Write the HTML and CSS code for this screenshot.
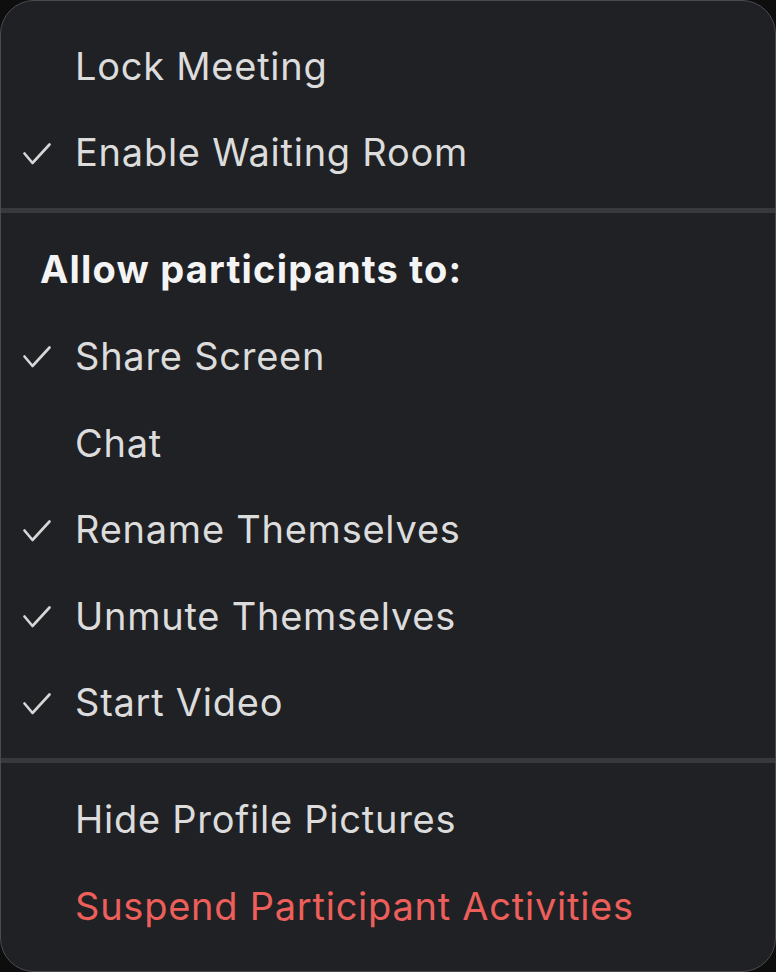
FILE: index.html
```html
<!DOCTYPE html>
<html>
<head>
<meta charset="utf-8">
<link rel="stylesheet" href="styles.css">
</head>
<body>
<div class="menu">
  <div class="group first">
    <div class="item"><span class="check"></span><span class="label">Lock Meeting</span></div>
    <div class="item"><span class="check"><svg viewBox="0 0 28 22" width="28" height="22"><path d="M1.5 10.5 L9.5 20 L26.5 1.5" /></svg></span><span class="label">Enable Waiting Room</span></div>
  </div>
  <div class="divider"></div>
  <div class="group">
    <div class="header">Allow participants to:</div>
    <div class="item"><span class="check"><svg viewBox="0 0 28 22" width="28" height="22"><path d="M1.5 10.5 L9.5 20 L26.5 1.5" /></svg></span><span class="label">Share Screen</span></div>
    <div class="item"><span class="check"></span><span class="label">Chat</span></div>
    <div class="item"><span class="check"><svg viewBox="0 0 28 22" width="28" height="22"><path d="M1.5 10.5 L9.5 20 L26.5 1.5" /></svg></span><span class="label">Rename Themselves</span></div>
    <div class="item"><span class="check"><svg viewBox="0 0 28 22" width="28" height="22"><path d="M1.5 10.5 L9.5 20 L26.5 1.5" /></svg></span><span class="label">Unmute Themselves</span></div>
    <div class="item"><span class="check"><svg viewBox="0 0 28 22" width="28" height="22"><path d="M1.5 10.5 L9.5 20 L26.5 1.5" /></svg></span><span class="label">Start Video</span></div>
  </div>
  <div class="divider second"></div>
  <div class="group last">
    <div class="item"><span class="check"></span><span class="label">Hide Profile Pictures</span></div>
    <div class="item danger"><span class="check"></span><span class="label">Suspend Participant Activities</span></div>
  </div>
</div>
</body>
</html>
```

FILE: styles.css
```css
html, body {
  margin: 0;
  padding: 0;
  background: #0e0e0f;
}
body {
  width: 776px;
  height: 972px;
  overflow: hidden;
  font-family: "Inter", "Noto Sans", sans-serif;
}
.menu {
  box-sizing: border-box;
  width: 776px;
  height: 972px;
  background: #202124;
  border-radius: 34px;
  border: 1.5px solid #4a4b4e;
  display: flex;
  flex-direction: column;
}
.group.first { padding-top: 21.7px; }
.item, .header {
  height: 86.6px;
  line-height: 86.6px;
  display: flex;
  align-items: center;
  font-size: 38px;
  color: #dcdcdc;
  letter-spacing: 0.75px;
  flex-shrink: 0;
}
.item .check {
  width: 52px;
  padding-left: 22px;
  box-sizing: content-box;
  display: flex;
  align-items: center;
  height: 86.6px;
}
.check svg {
  fill: none;
  stroke: #d6d6d6;
  stroke-width: 2.6;
  stroke-linecap: round;
  stroke-linejoin: round;
  margin-top: 2px;
}
.header {
  padding-left: 39px;
  font-weight: 700;
  color: #f4f4f4;
  letter-spacing: 1.2px;
}
.divider {
  height: 5px;
  background: #38393c;
  margin: 12.6px 0 13px;
  flex-shrink: 0;
}
.divider.second { margin: 11.5px 0 13.5px; }
.danger { color: #ec5f5b; }
```
